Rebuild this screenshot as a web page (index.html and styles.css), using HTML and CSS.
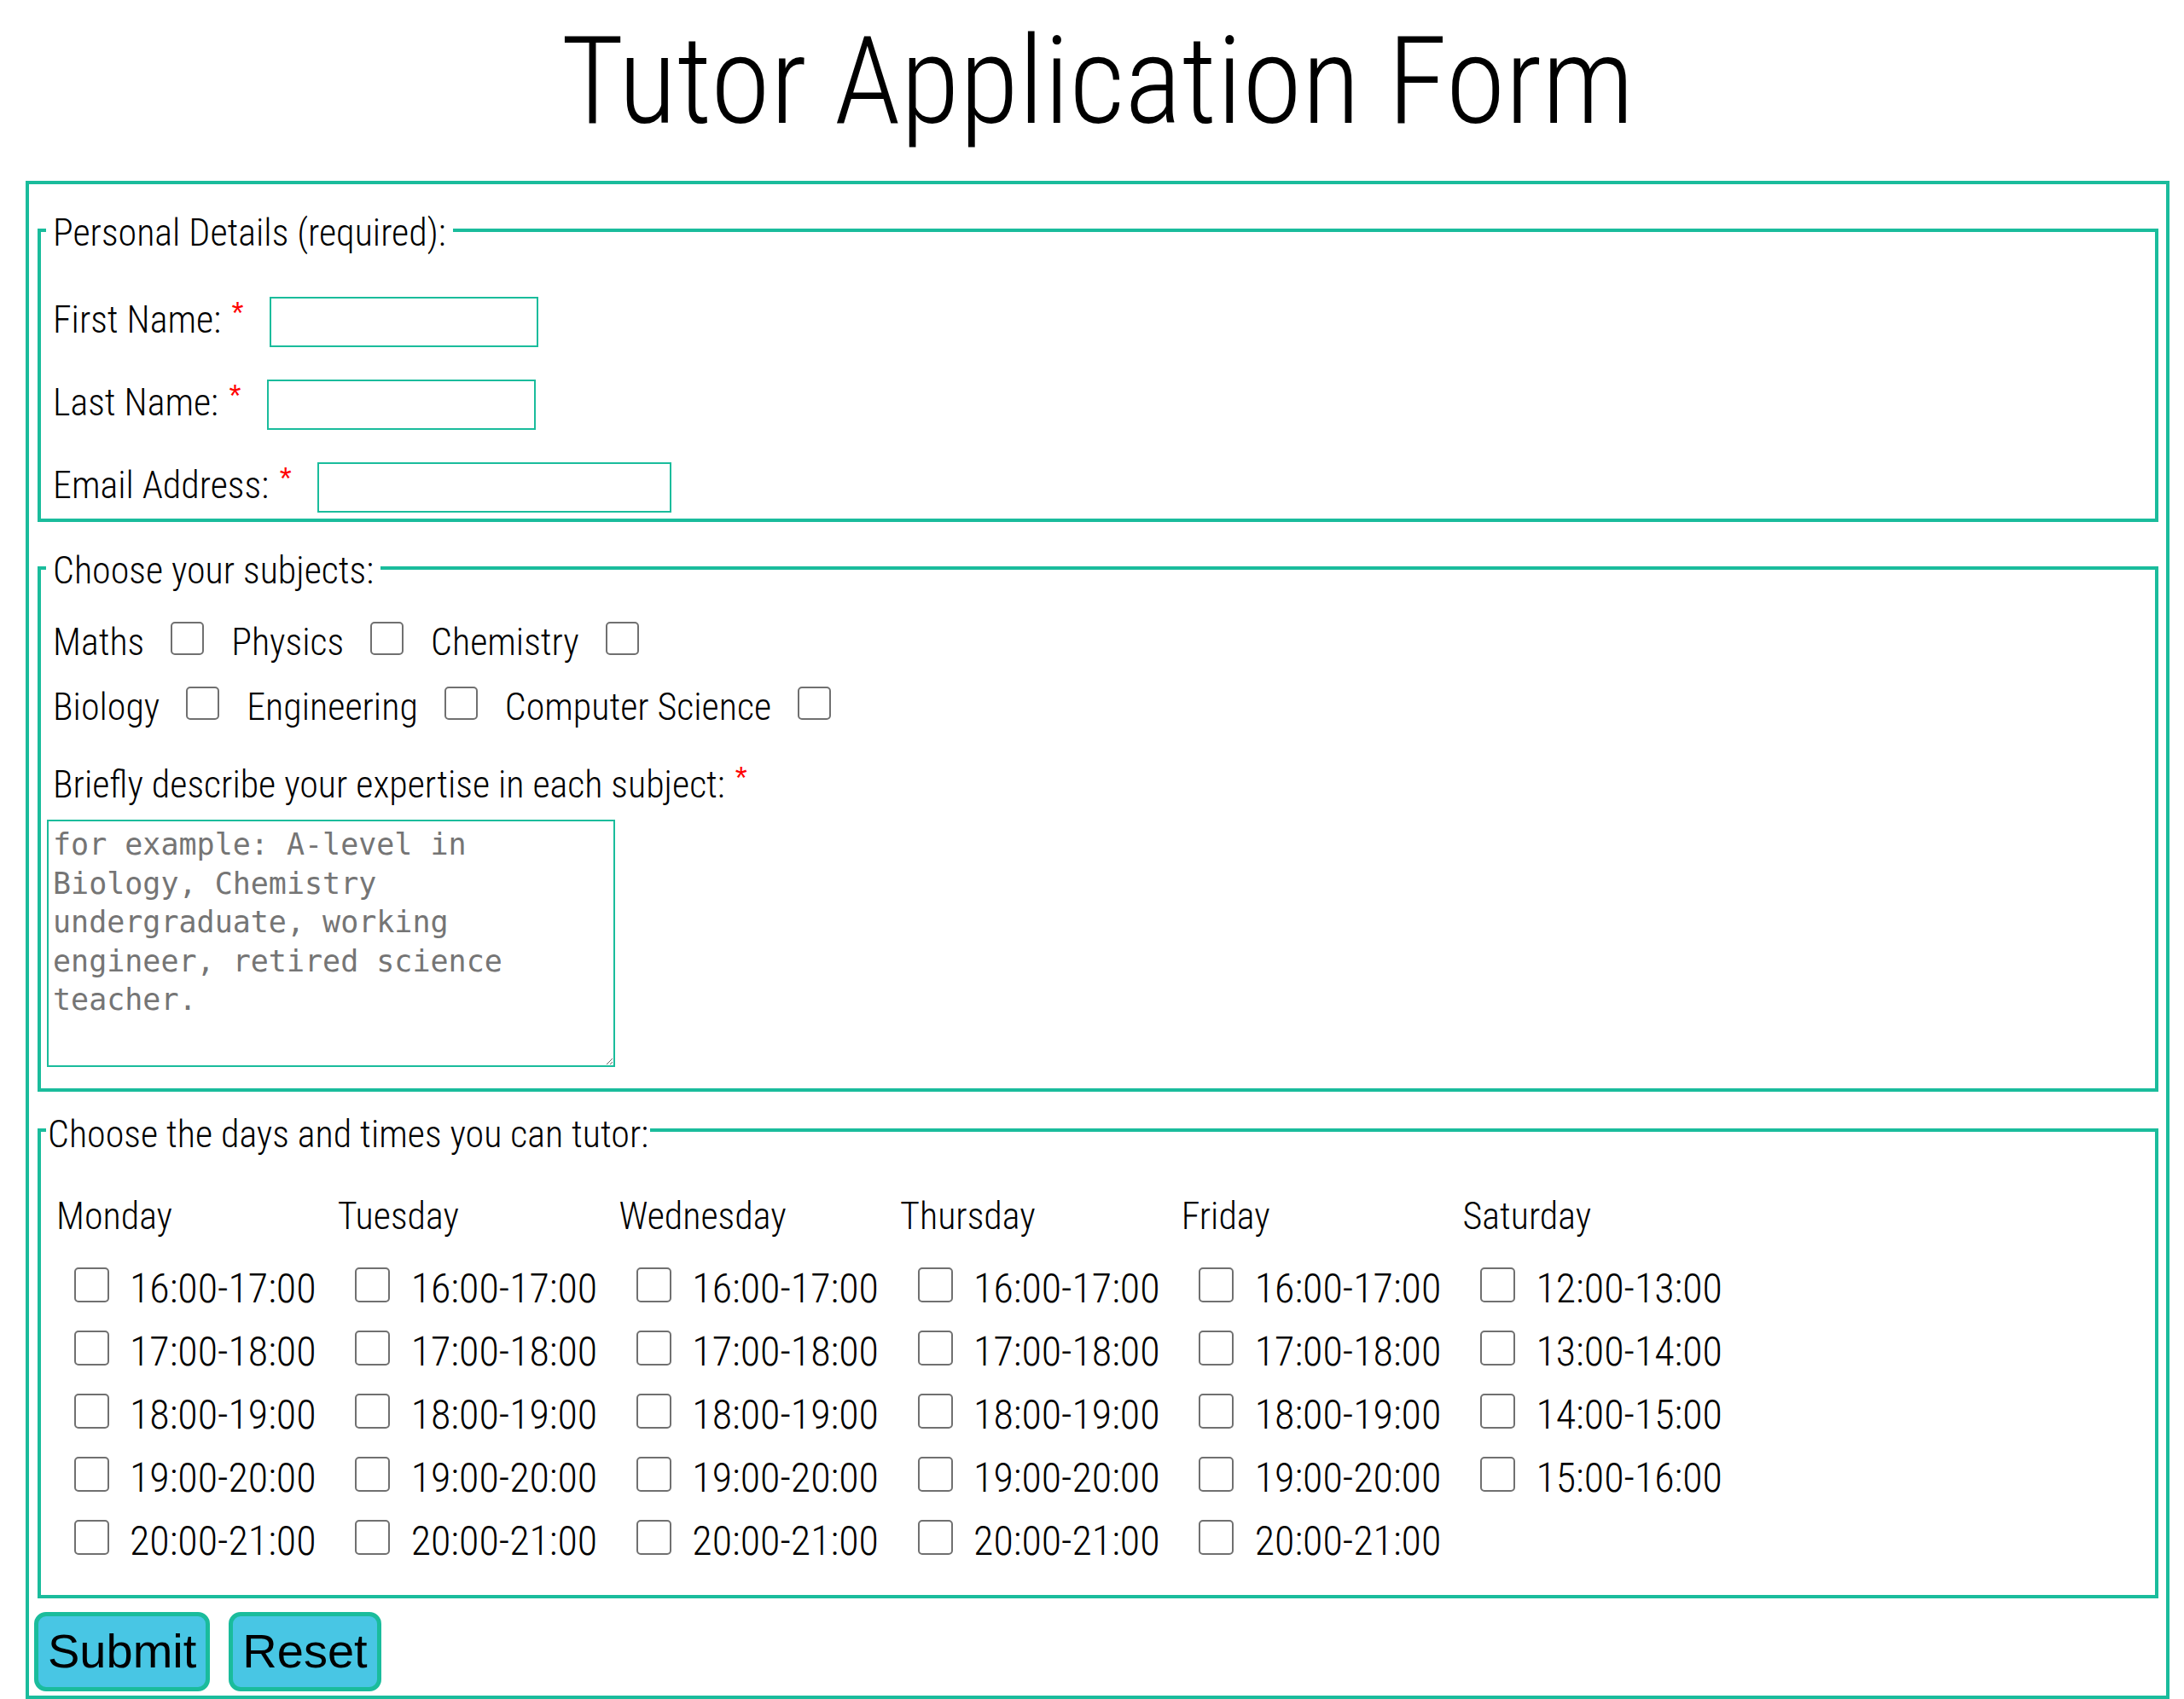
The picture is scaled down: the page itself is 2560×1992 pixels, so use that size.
FILE: index.html
```html
<!DOCTYPE html>
<html lang="en">
<head>
<meta charset="utf-8">
<title>Tutor Application Form</title>
<link rel="stylesheet" href="styles.css">
</head>
<body>
<h1 class="title">Tutor Application Form</h1>
<form class="app-form">
  <fieldset class="group group-personal">
    <legend class="group-title">Personal Details (required):</legend>
    <div class="fields">
      <div class="field-row">
        <label class="field-label" for="first">First Name:<span class="req">*</span></label>
        <input class="text-input" id="first" type="text">
      </div>
      <div class="field-row">
        <label class="field-label" for="last">Last Name:<span class="req">*</span></label>
        <input class="text-input" id="last" type="text">
      </div>
      <div class="field-row">
        <label class="field-label" for="email">Email Address:<span class="req">*</span></label>
        <input class="text-input text-input-wide" id="email" type="email">
      </div>
    </div>
  </fieldset>

  <fieldset class="group group-subjects">
    <legend class="group-title">Choose your subjects:</legend>
    <div class="subjects">
      <div class="subject-line">Maths<input class="box box-subject" type="checkbox">Physics<input class="box box-subject" type="checkbox">Chemistry<input class="box box-subject" type="checkbox"></div>
      <div class="subject-line">Biology<input class="box box-subject" type="checkbox">Engineering<input class="box box-subject" type="checkbox">Computer Science<input class="box box-subject" type="checkbox"></div>
    </div>
    <label class="describe" for="expertise">Briefly describe your expertise in each subject:<span class="req">*</span></label>
    <textarea class="expertise" id="expertise" placeholder="for example: A-level in Biology, Chemistry undergraduate, working engineer, retired science teacher."></textarea>
  </fieldset>

  <fieldset class="group group-times">
    <legend class="group-title">Choose the days and times you can tutor:</legend>
    <div class="days">
      <div class="day">
        <div class="day-name">Monday</div>
        <label class="slot"><input class="box box-slot" type="checkbox">16:00-17:00</label>
        <label class="slot"><input class="box box-slot" type="checkbox">17:00-18:00</label>
        <label class="slot"><input class="box box-slot" type="checkbox">18:00-19:00</label>
        <label class="slot"><input class="box box-slot" type="checkbox">19:00-20:00</label>
        <label class="slot"><input class="box box-slot" type="checkbox">20:00-21:00</label>
      </div>
      <div class="day">
        <div class="day-name">Tuesday</div>
        <label class="slot"><input class="box box-slot" type="checkbox">16:00-17:00</label>
        <label class="slot"><input class="box box-slot" type="checkbox">17:00-18:00</label>
        <label class="slot"><input class="box box-slot" type="checkbox">18:00-19:00</label>
        <label class="slot"><input class="box box-slot" type="checkbox">19:00-20:00</label>
        <label class="slot"><input class="box box-slot" type="checkbox">20:00-21:00</label>
      </div>
      <div class="day">
        <div class="day-name">Wednesday</div>
        <label class="slot"><input class="box box-slot" type="checkbox">16:00-17:00</label>
        <label class="slot"><input class="box box-slot" type="checkbox">17:00-18:00</label>
        <label class="slot"><input class="box box-slot" type="checkbox">18:00-19:00</label>
        <label class="slot"><input class="box box-slot" type="checkbox">19:00-20:00</label>
        <label class="slot"><input class="box box-slot" type="checkbox">20:00-21:00</label>
      </div>
      <div class="day">
        <div class="day-name">Thursday</div>
        <label class="slot"><input class="box box-slot" type="checkbox">16:00-17:00</label>
        <label class="slot"><input class="box box-slot" type="checkbox">17:00-18:00</label>
        <label class="slot"><input class="box box-slot" type="checkbox">18:00-19:00</label>
        <label class="slot"><input class="box box-slot" type="checkbox">19:00-20:00</label>
        <label class="slot"><input class="box box-slot" type="checkbox">20:00-21:00</label>
      </div>
      <div class="day">
        <div class="day-name">Friday</div>
        <label class="slot"><input class="box box-slot" type="checkbox">16:00-17:00</label>
        <label class="slot"><input class="box box-slot" type="checkbox">17:00-18:00</label>
        <label class="slot"><input class="box box-slot" type="checkbox">18:00-19:00</label>
        <label class="slot"><input class="box box-slot" type="checkbox">19:00-20:00</label>
        <label class="slot"><input class="box box-slot" type="checkbox">20:00-21:00</label>
      </div>
      <div class="day">
        <div class="day-name">Saturday</div>
        <label class="slot"><input class="box box-slot" type="checkbox">12:00-13:00</label>
        <label class="slot"><input class="box box-slot" type="checkbox">13:00-14:00</label>
        <label class="slot"><input class="box box-slot" type="checkbox">14:00-15:00</label>
        <label class="slot"><input class="box box-slot" type="checkbox">15:00-16:00</label>
      </div>
    </div>
  </fieldset>

  <div class="actions">
    <button class="btn" type="submit">Submit</button>
    <button class="btn" type="reset">Reset</button>
  </div>
</form>
</body>
</html>
```
FILE: styles.css
```css
* {
  box-sizing: border-box;
}

html,
body {
  margin: 0;
  padding: 0;
  background: #ffffff;
}

body {
  font-family: "Roboto", "Open Sans", sans-serif;
  font-stretch: 75%;
  font-weight: 300;
  color: #000000;
}

.title {
  margin: 10.5px 17px 0 30px;
  font-size: 142px;
  line-height: 170px;
  font-weight: 300;
  text-align: center;
}

.app-form {
  margin: 31.5px 17px 0 30px;
  border: 4px solid #1abc9c;
  padding: 25px 9px 5px 6px;
}

.group {
  margin: 0 0 0 4px;
  border: 4px solid #1abc9c;
  padding: 0 6px;
  min-width: 0;
}

.group-title {
  margin: 0;
  padding: 6px 8px 0;
  font-size: 44px;
  line-height: 52px;
}

.group-personal {
  padding-bottom: 7px;
}

.group-subjects {
  margin-top: 24.5px;
  padding-bottom: 25px;
}

.group-times {
  margin-top: 14.5px;
  padding-bottom: 25.7px;
}

.group-times .group-title {
  padding: 9px 2px 0;
}

/* personal details */
.fields {
  padding-top: 49px;
}

.field-row {
  display: flex;
  align-items: center;
  height: 59px;
  padding-left: 8px;
}

.field-row + .field-row {
  margin-top: 38px;
}

.field-label {
  font-size: 44px;
  line-height: 52px;
  padding-bottom: 5px;
  white-space: nowrap;
}

.req {
  color: #ff0000;
  font-family: "Liberation Sans", Arial, sans-serif;
  font-stretch: 100%;
  font-weight: 400;
  font-size: 36px;
  line-height: 0;
  vertical-align: 10px;
  margin-left: 12.6px;
}

.text-input {
  margin: 0 0 0 30.4px;
  width: 315px;
  height: 59px;
  border: 2px solid #1abc9c;
  border-radius: 0;
  padding: 0 8px;
  font-family: "Liberation Sans", Arial, sans-serif;
  font-size: 30px;
  background: #ffffff;
  outline: none;
}

.text-input-wide {
  width: 415px;
}

/* subjects */
.subjects {
  margin-top: 20.5px;
  padding-left: 8px;
}

.subject-line {
  font-size: 44px;
  line-height: 76px;
  white-space: nowrap;
}

.box {
  appearance: none;
  -webkit-appearance: none;
  display: inline-block;
  border: 2px solid #707070;
  border-radius: 5px;
  background: #ffffff;
  vertical-align: baseline;
  padding: 0;
}

.box-subject {
  width: 39px;
  height: 39px;
  margin: 0 32px 0 31px;
}

.describe {
  display: block;
  margin-top: 25px;
  padding-left: 8px;
  font-size: 44px;
  line-height: 56px;
}

.describe .req {
  margin-left: 12px;
}

.expertise {
  display: block;
  margin: 13px 0 0 1px;
  width: 666px;
  height: 290px;
  border: 2px solid #1abc9c;
  border-radius: 0;
  padding: 5px;
  font-family: "DejaVu Sans Mono", "Liberation Mono", monospace;
  font-stretch: 100%;
  font-weight: 400;
  font-size: 35px;
  line-height: 45.6px;
  color: #000000;
  background: #ffffff;
  outline: none;
}

.expertise::placeholder {
  color: #757575;
}

/* days and times */
.days {
  display: grid;
  grid-template-columns: repeat(6, 329.7px);
  padding-left: 12px;
}

.day {
  display: flex;
  flex-direction: column;
}

.day-name {
  margin-top: 44.2px;
  margin-bottom: 22.6px;
  font-size: 44px;
  line-height: 52px;
}

.slot {
  display: block;
  font-size: 48px;
  line-height: 74px;
  white-space: nowrap;
}

.box-slot {
  width: 41px;
  height: 41px;
  margin: 0 24.4px 0 20.6px;
}

/* buttons */
.actions {
  display: flex;
  gap: 22px;
  margin-top: 16px;
}

.btn {
  margin: 0;
  padding: 9.5px 11px;
  border: 5px solid #1abc9c;
  border-radius: 14px;
  background: #48c6e4;
  color: #000000;
  font-family: "Liberation Sans", Arial, sans-serif;
  font-size: 56px;
  line-height: 64px;
  cursor: pointer;
}
```
